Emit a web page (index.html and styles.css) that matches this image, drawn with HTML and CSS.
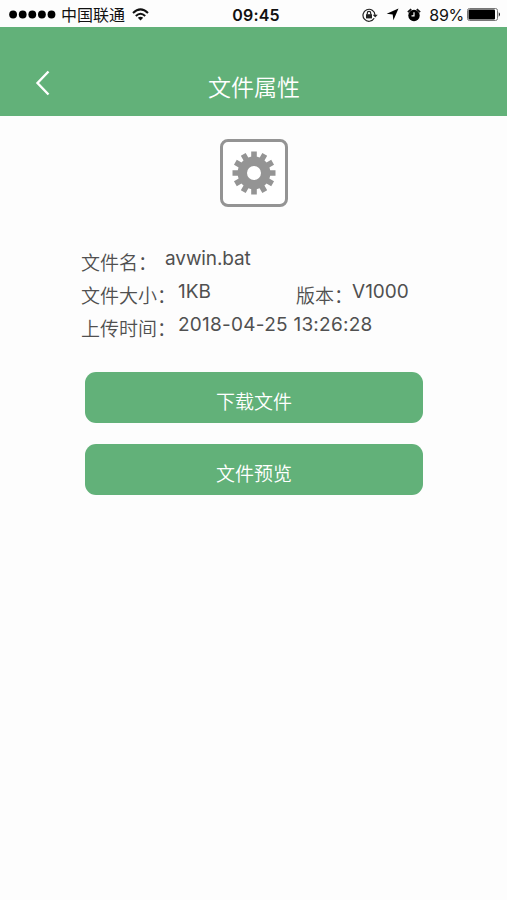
FILE: index.html
```html
<!DOCTYPE html>
<html lang="zh-CN">
<head>
    <meta charset="UTF-8">
    <meta name="viewport" content="width=device-width, initial-scale=1.0">
    <title>文件属性</title>
    <link rel="stylesheet" href="styles.css">
</head>
<body>
    <div class="status-bar">
        <div class="status-left">
            <svg class="signal" width="47" height="9" viewBox="0 0 47 9">
                <circle cx="4.1" cy="4.5" r="3.9"/>
                <circle cx="13.7" cy="4.5" r="3.9"/>
                <circle cx="23.3" cy="4.5" r="3.9"/>
                <circle cx="32.9" cy="4.5" r="3.9"/>
                <circle cx="42.5" cy="4.5" r="3.9"/>
            </svg>
            <span class="carrier">中国联通</span>
            <svg class="wifi" width="17" height="13" viewBox="0 0 17 13" fill="none" stroke="#111" stroke-width="2">
                <path d="M1 5Q8.5 -2.3 16 5M3.8 7.9Q8.5 3.5 13.2 7.9"/>
                <path d="M8.5 12.5L5.8 9.7Q8.5 7.6 11.2 9.7Z" fill="#111" stroke="none"/>
            </svg>
        </div>
        <div class="clock">09:45</div>
        <div class="status-right">
            <svg width="17" height="14" viewBox="0 0 17 14" fill="none" stroke="#222" stroke-width="1.2">
                <path d="M12.2 10.3A6 6 0 1 1 13 7"/>
                <path d="M10.7 6.7H15.7L13.2 9.5Z" fill="#222" stroke="none"/>
                <path d="M5.3 6.5V5A1.7 1.7 0 0 1 8.7 5V6.5"/>
                <rect x="4" y="6.2" width="6" height="4.2" fill="#222" stroke="none"/>
            </svg>
            <svg class="location" width="13" height="13" viewBox="0 0 13 13">
                <path d="M12.5 .5L7.4 12.2L6.7 6.5L.7 5.8Z"/>
            </svg>
            <svg class="alarm" width="14" height="14" viewBox="0 0 14 14">
                <circle cx="7" cy="7.5" r="5.7"/>
                <path d="M.9 4.2L4.2 1.1M13.1 4.2L9.8 1.1" stroke="#111" stroke-width="1.8"/>
                <path d="M7 4.3V7.8H4.5" fill="none" stroke="#fff" stroke-width="1.2"/>
            </svg>
            <span class="percent">89%</span>
            <svg class="battery" width="34" height="13" viewBox="0 0 34 13">
                <rect x=".5" y=".5" width="30" height="12" rx="2" fill="#fff" stroke="#777"/>
                <rect x="1.5" y="1.5" width="26.5" height="10" rx="1"/>
                <path d="M31.8 4.3Q34 6.5 31.8 8.7Z"/>
            </svg>
        </div>
    </div>

    <div class="header">
        <svg class="back" width="16" height="26" viewBox="0 0 16 26">
            <path d="M13.5 1.5L2.5 13L13.5 24.5"/>
        </svg>
        <h1>文件属性</h1>
    </div>

    <div class="content">
        <div class="file-icon">
            <svg width="44" height="44" viewBox="-22 -22 44 44">
                <g stroke="#949494" stroke-width="5.6">
                    <path d="M0 -21.5V-12M0 21.5V12M-21.5 0H-12M21.5 0H12"/>
                    <path d="M0 -21.5V-12M0 21.5V12M-21.5 0H-12M21.5 0H12" transform="rotate(30)"/>
                    <path d="M0 -21.5V-12M0 21.5V12M-21.5 0H-12M21.5 0H12" transform="rotate(60)"/>
                </g>
                <circle r="11.7" fill="none" stroke="#949494" stroke-width="9.4"/>
            </svg>
        </div>

        <div class="info">
            <div class="row">
                <span class="label">文件名：</span>
                <span class="value name">avwin.bat</span>
            </div>
            <div class="row">
                <span class="label">文件大小：</span>
                <span class="value size">1KB</span>
                <span class="label">版本：</span>
                <span class="value version">V1000</span>
            </div>
            <div class="row">
                <span class="label">上传时间：</span>
                <span class="value date">2018-04-25 13:26:28</span>
            </div>
        </div>

        <button class="btn">下载文件</button>
        <button class="btn">文件预览</button>
    </div>
</body>
</html>
```
FILE: styles.css
```css
body {
    margin: 0;
    min-height: 900px;
    background: #fdfdfd;
    color: #505050;
    font-family: Inter, "Noto Sans CJK SC", sans-serif;
}
svg {
    display: block;
    flex: none;
}
.status-bar {
    display: grid;
    grid-template-columns: 1fr auto 1fr;
    align-items: center;
    height: 27px;
    padding: 2px 6px 0 9px;
    box-sizing: border-box;
    color: #111;
    font-size: 16px;
    line-height: 24px;
}
.status-left,
.status-right {
    display: flex;
    align-items: center;
}
.status-right {
    justify-content: flex-end;
}
.carrier {
    margin: 0 7px 0 5px;
}
.clock {
    padding-left: 2px;
    font-weight: 600;
    letter-spacing: 0.2px;
}
.location {
    margin-left: 7px;
}
.alarm {
    margin: 0 8px 0 8px;
}
.percent {
    margin-right: 3px;
    letter-spacing: -0.3px;
}
.header {
    display: grid;
    grid-template-columns: 100px 1fr 100px;
    align-items: center;
    height: 89px;
    padding-top: 22px;
    box-sizing: border-box;
    background: #62b179;
    color: #fff;
}
.back {
    margin-left: 35px;
    fill: none;
    stroke: #fff;
    stroke-width: 2.4;
}
h1 {
    margin: 10px 0 0 1px;
    font-size: 23px;
    font-weight: 350;
    line-height: 34px;
    text-align: center;
}
.content {
    display: flex;
    flex-direction: column;
    align-items: center;
    padding-top: 23px;
}
.file-icon {
    display: flex;
    align-items: center;
    justify-content: center;
    width: 68px;
    height: 68px;
    box-sizing: border-box;
    border: 3px solid #949494;
    border-radius: 8px;
    background: #fff;
}
.info {
    width: 345px;
    margin: 35px 0 31px;
}
.row {
    display: flex;
    height: 33px;
    font-size: 19px;
    line-height: 33px;
    white-space: nowrap;
}
.label {
    padding-top: 3px;
    font-family: "Noto Sans CJK SC", sans-serif;
    font-weight: 350;
}
.value {
    margin-left: 2px;
}
.name {
    margin-left: 8px;
    letter-spacing: -0.1px;
}
.size {
    width: 118px;
}
.version {
    margin-left: -1px;
}
.date {
    letter-spacing: 0.25px;
}
.btn {
    width: 338px;
    height: 51px;
    margin: 0 0 21px 1px;
    padding: 6px 0 0;
    border: none;
    border-radius: 11px;
    background: #62b179;
    color: #fff;
    font-family: inherit;
    font-size: 19px;
    font-weight: 350;
}
```
